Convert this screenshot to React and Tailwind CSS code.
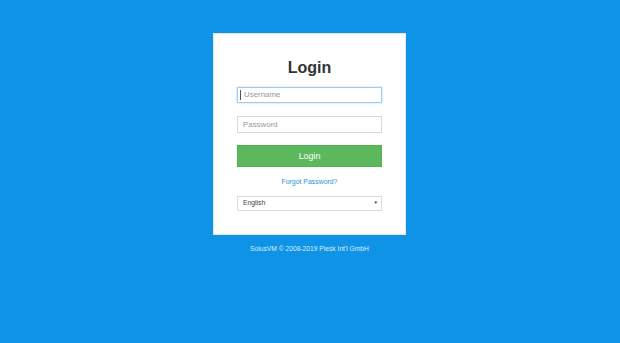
export default function App() {
  return (
    <div
      className="w-[620px] h-[343px] bg-[#0f93e6] flex flex-col items-center pt-[33px] pr-[1px]"
      style={{ fontFamily: '"Liberation Sans", Arial, sans-serif' }}
    >
      <div className="w-[193px] bg-white border border-[#e6e6e6] px-[23px] pt-[25px] pb-[23px] flex flex-col">
        <h1 className="text-[16px] leading-[18px] font-bold text-[#333] text-center">Login</h1>
        <div className="mt-[10px] h-[16px] border border-[#9fcdf0] shadow-[0_0_2px_rgba(102,175,233,0.5)] flex items-center pl-[2px]">
          <span className="w-px h-[10px] bg-[#555]"></span>
          <span className="ml-[3px] text-[7.9px] text-[#999] leading-none">Username</span>
        </div>
        <div className="mt-[13px] h-[17px] border border-[#d9d9d9] flex items-center pl-[5px]">
          <span className="text-[7.9px] text-[#999] leading-none">Password</span>
        </div>
        <div className="mt-[12px] h-[22px] bg-[#5cb85c] border border-[#52b152] flex items-center justify-center">
          <span className="text-[8.9px] text-white leading-none">Login</span>
        </div>
        <div className="mt-[11px] text-center text-[6.9px] leading-[8px] text-[#2a93dc]">Forgot Password?</div>
        <div className="mt-[10px] h-[15px] border border-[#dcdcdc] flex items-center justify-between pl-[5px] pr-[3px]">
          <span className="text-[6.8px] text-[#444] leading-none">English</span>
          <span className="text-[4.5px] text-[#333] leading-none">▼</span>
        </div>
      </div>
      <div className="mt-[10px] text-[6.7px] leading-[8px] text-[#dceefc]">SolusVM © 2008-2019 Plesk Int'l GmbH</div>
    </div>
  );
}
